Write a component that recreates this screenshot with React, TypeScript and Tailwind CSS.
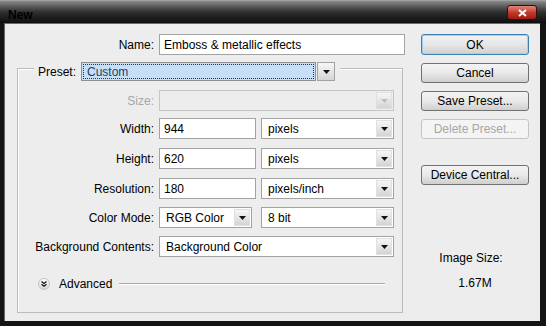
import React from "react";

const font = "font-['Liberation_Sans',Arial,sans-serif]";

function Arrow({ disabled = false }: { disabled?: boolean }) {
    return (
        <div className="w-[16px] h-[17px] my-auto mr-[1px] flex items-center justify-center bg-gradient-to-b from-[#f6f6f6] to-[#d4d4d4] border border-[#e0e0e0]">
            <svg width="7" height="4" viewBox="0 0 7 4">
                <path d="M0 0h7L3.5 4z" fill={disabled ? "#bdbdbd" : "#111"} />
            </svg>
        </div>
    );
}

function Select({ value, w, disabled = false }: { value: string; w: string; disabled?: boolean }) {
    return (
        <div
            className={`${w} h-[21px] flex border ${
                disabled ? "border-[#c6c6c6] bg-[#ededed]" : "border-[#a3a3a3] bg-white"
            }`}
        >
            <div className="flex-1 flex items-center pl-[6px] text-black">{value}</div>
            <Arrow disabled={disabled} />
        </div>
    );
}

function Input({ value, w }: { value: string; w: string }) {
    return (
        <div className={`${w} h-[21px] flex items-center border border-[#a3a3a3] bg-white pl-[4px] text-black`}>
            {value}
        </div>
    );
}

function Row({ label, children, mt, muted = false }: { label: string; children: React.ReactNode; mt: string; muted?: boolean }) {
    return (
        <div className={`flex items-center h-[21px] ${mt}`}>
            <div className={`w-[136px] text-right ${muted ? "text-[#a6a6a6]" : "text-black"}`}>{label}</div>
            <div className="ml-[5px] flex gap-[5px]">{children}</div>
        </div>
    );
}

function Button({ label, mt, primary = false, disabled = false, h = "h-[20px]" }: { label: string; mt: string; primary?: boolean; disabled?: boolean; h?: string }) {
    return (
        <div
            className={`${mt} ${h} w-[108px] rounded-[3px] flex items-center justify-center border ${
                disabled
                    ? "border-[#c2c4c6] bg-[#f4f4f4] text-[#a6a6a6]"
                    : primary
                    ? "border-[#3c7fb1] bg-gradient-to-b from-[#f2f2f2] via-[#e6e6e6] to-[#d0d0d0] text-black shadow-[inset_0_0_0_1px_#9fd3f5]"
                    : "border-[#707070] bg-gradient-to-b from-[#f3f3f3] via-[#e9e9e9] to-[#cfcfcf] text-black"
            }`}
        >
            {label}
        </div>
    );
}

export default function App() {
    return (
        <div className={`w-[546px] h-[326px] bg-[#141414] flex flex-col text-[12px] text-black ${font}`}>
            {/* title bar */}
            <div className="h-[23px] flex items-start bg-gradient-to-b from-[#8a8a8a] via-[#303030] to-[#0e0e0e] border-t border-[#a0a0a0]">
                <span className="ml-[8px] mt-[5px] font-bold text-black">New</span>
                <div className="ml-auto mr-[9px] mt-[4px] w-[30px] h-[15px] rounded-[3px] border border-[#3a0c08] bg-gradient-to-b from-[#e3867a] via-[#c2392c] to-[#9d1c12] flex items-center justify-center">
                    <svg width="9" height="8" viewBox="0 0 9 8">
                        <path d="M1 1l7 6M8 1L1 7" stroke="#fff" strokeWidth="2" />
                    </svg>
                </div>
            </div>

            {/* client area */}
            <div className="ml-[4px] w-[536px] h-[298px] bg-[#ededed] border-l border-t border-[#6a6a6a] flex pt-[10px]">
                <div className="w-[406px]">
                    <div className="flex items-center h-[21px]">
                        <div className="w-[149px] text-right text-black">Name:</div>
                        <div className="ml-[5px]">
                            <Input value="Emboss & metallic effects" w="w-[246px]" />
                        </div>
                    </div>

                    <div className="ml-[12px] mt-[13px] w-[386px] h-[245px] border border-[#bcbcbc] shadow-[inset_1px_1px_0_#fff]">
                        <div className="-mt-[7px] flex items-center h-[19px]">
                            <div className="ml-[16px] pl-[4px] pr-[5px] h-full flex items-center bg-[#ededed]">
                                <span className="text-black">Preset:</span>
                                <div className="ml-[5px] w-[235px] h-[19px] border border-[#8f8f8f] bg-[#c6def6] p-[1px]">
                                    <div className="h-full border border-dotted border-[#333] flex items-center pl-[3px] text-[#1f3f6a]">
                                        Custom
                                    </div>
                                </div>
                                <div className="ml-[1px] w-[18px] h-[19px] border border-[#a3a3a3] bg-gradient-to-b from-[#f6f6f6] to-[#d5d5d5] flex items-center justify-center">
                                    <svg width="7" height="4" viewBox="0 0 7 4">
                                        <path d="M0 0h7L3.5 4z" fill="#111" />
                                    </svg>
                                </div>
                            </div>
                        </div>

                        <Row label="Size:" mt="mt-[9px]" muted>
                            <Select value="" w="w-[235px]" disabled />
                        </Row>
                        <Row label="Width:" mt="mt-[7px]">
                            <Input value="944" w="w-[97px]" />
                            <Select value="pixels" w="w-[133px]" />
                        </Row>
                        <Row label="Height:" mt="mt-[9px]">
                            <Input value="620" w="w-[97px]" />
                            <Select value="pixels" w="w-[133px]" />
                        </Row>
                        <Row label="Resolution:" mt="mt-[9px]">
                            <Input value="180" w="w-[97px]" />
                            <Select value="pixels/inch" w="w-[133px]" />
                        </Row>
                        <Row label="Color Mode:" mt="mt-[8px]">
                            <div className="mr-[4px]">
                                <Select value="RGB Color" w="w-[93px]" />
                            </div>
                            <Select value="8 bit" w="w-[133px]" />
                        </Row>
                        <Row label="Background Contents:" mt="mt-[8px]">
                            <Select value="Background Color" w="w-[235px]" />
                        </Row>

                        <div className="mt-[21px] flex items-center h-[12px]">
                            <div className="ml-[20px] w-[12px] h-[12px] rounded-full border border-[#c4c4c4] bg-gradient-to-b from-[#ffffff] to-[#d6d6d6] flex items-center justify-center">
                                <svg width="6" height="6" viewBox="0 0 6 6">
                                    <path d="M0.5 0.5L3 2.5L5.5 0.5M0.5 3.2L3 5.2L5.5 3.2" stroke="#111" strokeWidth="1.2" fill="none" />
                                </svg>
                            </div>
                            <span className="ml-[9px] text-black">Advanced</span>
                            <div className="ml-[7px] mr-[17px] flex-1 h-[2px] border-t border-[#a8a8a8] border-b border-b-white" />
                        </div>
                    </div>
                </div>

                <div className="ml-[10px] w-[108px] flex flex-col">
                    <Button label="OK" mt="mt-0" primary h="h-[21px]" />
                    <Button label="Cancel" mt="mt-[8px]" />
                    <Button label="Save Preset..." mt="mt-[8px]" />
                    <Button label="Delete Preset..." mt="mt-[8px]" disabled />
                    <Button label="Device Central..." mt="mt-[26px]" />
                    <div className="mt-[66px] h-[14px] leading-[14px] text-center pr-[8px] text-black">Image Size:</div>
                    <div className="mt-[11px] h-[14px] leading-[14px] text-center text-black">1.67M</div>
                </div>
            </div>
        </div>
    );
}
